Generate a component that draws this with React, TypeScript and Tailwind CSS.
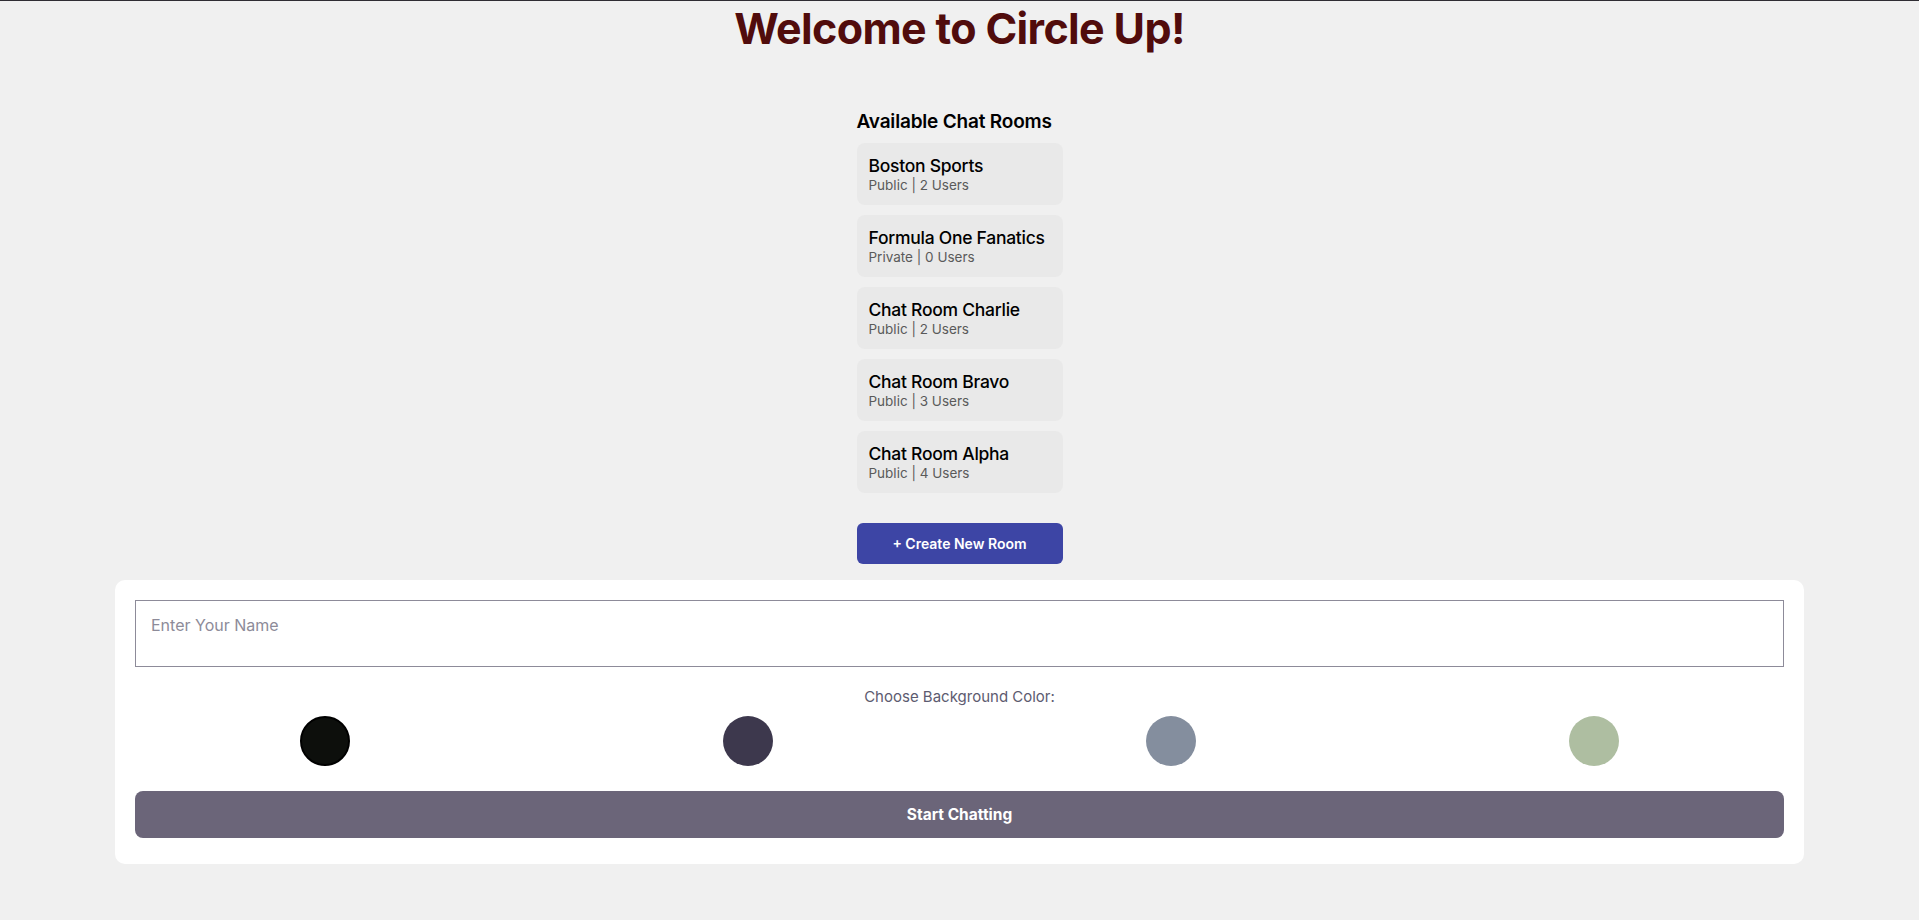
import { useState } from "react";

const rooms = [
  { name: "Boston Sports", type: "Public", users: 2 },
  { name: "Formula One Fanatics", type: "Private", users: 0 },
  { name: "Chat Room Charlie", type: "Public", users: 2 },
  { name: "Chat Room Bravo", type: "Public", users: 3 },
  { name: "Chat Room Alpha", type: "Public", users: 4 },
];

const colors = ["#0d0f0c", "#3d384d", "#848e9e", "#aebea1"];

export default function App() {
  const [selected, setSelected] = useState(0);
  const [name, setName] = useState("");

  return (
    <div
      className="min-h-[920px] border-t border-[#2f2d33] bg-[#f0f0f0] pt-[6px] text-black"
      style={{ fontFamily: "Inter, 'Noto Sans', sans-serif" }}
    >
      <h1 className="text-center text-[43px] font-bold leading-[43px] tracking-[-0.015em] text-[#510c0c]">
        Welcome to Circle Up!
      </h1>

      <div className="mx-auto mt-[60px] w-[206px]">
        <h2 className="text-[19px] font-semibold leading-[24px] tracking-[-0.01em]">Available Chat Rooms</h2>
        <ul className="mt-[9px] flex flex-col gap-[10px]">
          {rooms.map((room) => (
            <li className="h-[62px] rounded-lg bg-[#e9e9e9] px-3 pt-[11px]" key={room.name}>
              <p className="whitespace-nowrap text-[17.5px] font-medium leading-[23px] tracking-[-0.015em]">
                {room.name}
              </p>
              <p className="text-[13.5px] leading-[17px] text-[#5a5a5a]">
                {room.type} | {room.users} Users
              </p>
            </li>
          ))}
        </ul>
        <button className="mt-[30px] h-[41px] w-full rounded-md bg-[#3d45a5] text-[14px] font-semibold text-white">
          + Create New Room
        </button>
      </div>

      <div className="mx-[115px] mt-4 rounded-[10px] bg-white px-5 pt-5 pb-[26px]">
        <textarea
          className="block h-[67px] w-full resize-none border border-[#8d8b99] px-[15px] pt-[12px] pb-2 text-base leading-6 outline-none placeholder:text-[#8d8b99]"
          onChange={(e) => setName(e.target.value)}
          placeholder="Enter Your Name"
          value={name}
        />
        <p className="mt-[18px] text-center text-[15px] leading-6 text-[#5d5b70]">Choose Background Color:</p>
        <div className="mt-[7px] flex justify-between px-[165px]">
          {colors.map((c, i) => (
            <button
              className={
                i === selected
                  ? "h-[50px] w-[50px] rounded-full border-2 border-black"
                  : "h-[50px] w-[50px] rounded-full"
              }
              key={c}
              onClick={() => setSelected(i)}
              style={{ backgroundColor: c }}
            />
          ))}
        </div>
        <button className="mt-[25px] h-[47px] w-full rounded-lg bg-[#6b6579] text-[15.5px] font-bold text-white">
          Start Chatting
        </button>
      </div>
    </div>
  );
}
